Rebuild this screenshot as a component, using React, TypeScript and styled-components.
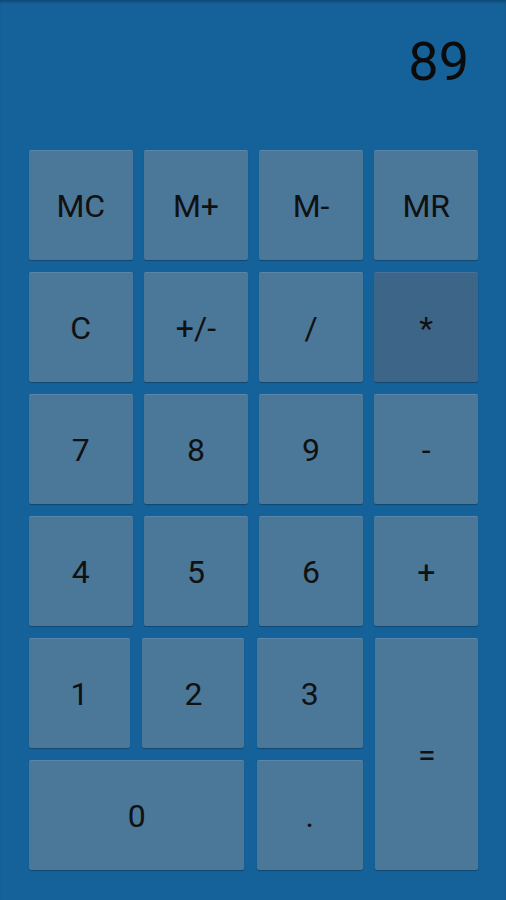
import styled, { createGlobalStyle } from "styled-components";

const GlobalStyle = createGlobalStyle`
  html, body {
    margin: 0;
    padding: 0;
    background: #15629b;
  }
  body {
    font-family: Roboto, "Noto Sans", "DejaVu Sans", sans-serif;
  }
`;

const Screen = styled.div`
  width: 506px;
  height: 900px;
  background: #15629b;
  box-shadow: inset 0 3px 3px -1px rgba(0, 0, 0, 0.25);
  display: flex;
  flex-direction: column;
  overflow: hidden;
`;

const Display = styled.div`
  height: 150px;
  box-sizing: border-box;
  padding: 20px 37px 0 0;
  display: flex;
  justify-content: flex-end;
  align-items: flex-start;
  font-size: 54px;
  line-height: 84px;
  color: #0b0b0b;
`;

const Keypad = styled.div`
  display: flex;
  flex-direction: column;
  gap: 12px;
  padding: 0 28px 0 29px;
`;

const UpperGrid = styled.div`
  display: grid;
  grid-template-columns: repeat(4, 1fr);
  grid-auto-rows: 110px;
  column-gap: 11.6px;
  row-gap: 12px;
`;

const LowerGrid = styled.div`
  display: grid;
  grid-template-columns: 101px 102px 106px 103px;
  grid-template-rows: 110px 110px;
  column-gap: 12.4px;
  row-gap: 12px;
`;

const Key = styled.button<{ $dark?: boolean; $col?: string; $row?: string }>`
  appearance: none;
  border: none;
  margin: 0;
  padding: 0;
  border-radius: 2px;
  background: ${({ $dark }) => ($dark ? "#3d6588" : "#4b7799")};
  border-top: 1px solid ${({ $dark }) => ($dark ? "#47709a" : "#5a87a9")};
  box-shadow: 0 1px 1px rgba(0, 0, 0, 0.28);
  font-family: Roboto, "Noto Sans", sans-serif;
  font-size: 32px;
  color: #111;
  display: flex;
  align-items: center;
  justify-content: center;
  grid-column: ${({ $col }) => $col ?? "auto"};
  grid-row: ${({ $row }) => $row ?? "auto"};
`;

const upper: { label: string; dark?: boolean }[] = [
  { label: "MC" },
  { label: "M+" },
  { label: "M-" },
  { label: "MR" },
  { label: "C" },
  { label: "+/-" },
  { label: "/" },
  { label: "*", dark: true },
  { label: "7" },
  { label: "8" },
  { label: "9" },
  { label: "-" },
  { label: "4" },
  { label: "5" },
  { label: "6" },
  { label: "+" },
];

export default function App() {
  return (
    <>
      <GlobalStyle />
      <Screen>
        <Display>89</Display>
        <Keypad>
          <UpperGrid>
            {upper.map((k) => (
              <Key key={k.label} $dark={k.dark}>
                {k.label}
              </Key>
            ))}
          </UpperGrid>
          <LowerGrid>
            <Key>1</Key>
            <Key>2</Key>
            <Key>3</Key>
            <Key $col="4" $row="1 / span 2">=</Key>
            <Key $col="1 / span 2">0</Key>
            <Key $col="3">.</Key>
          </LowerGrid>
        </Keypad>
      </Screen>
    </>
  );
}
